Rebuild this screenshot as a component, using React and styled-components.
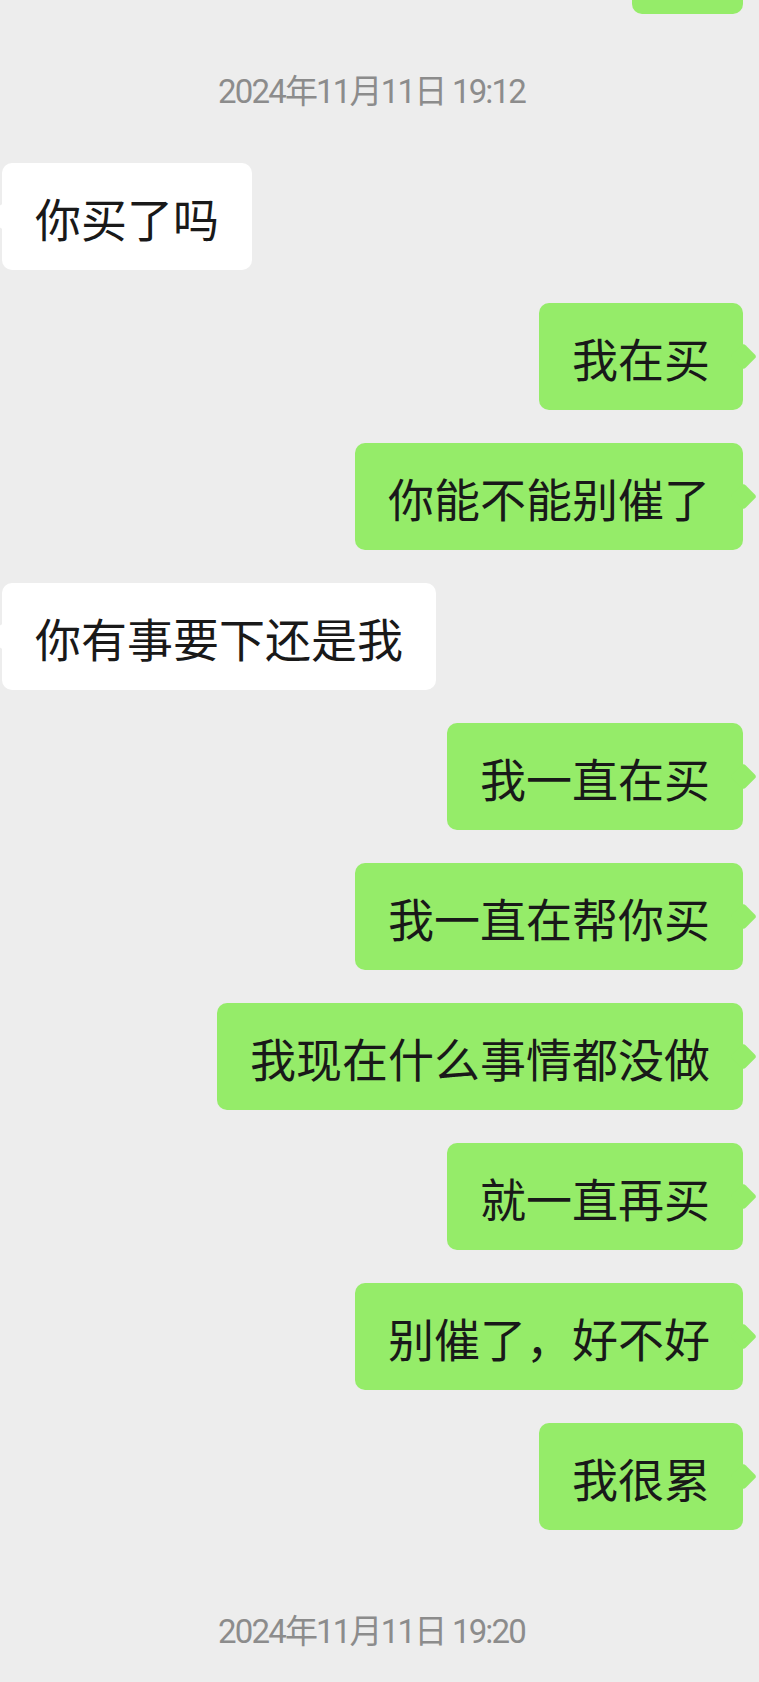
import React from "react";
import styled, { createGlobalStyle } from "styled-components";

const GlobalStyle = createGlobalStyle`
  html, body {
    margin: 0;
    padding: 0;
    background: #ededed;
  }
  * { box-sizing: border-box; }
`;

const Screen = styled.div`
  width: 759px;
  min-height: 1682px;
  background: #ededed;
  overflow: hidden;
  font-family: "Noto Sans CJK SC", "Noto Sans", sans-serif;
`;

const Thread = styled.div`
  display: flex;
  flex-direction: column;
  gap: 33px;
`;

const Stamp = styled.div`
  align-self: center;
  margin: ${(p) => p.$above}px 16px ${(p) => p.$below}px 0;
  height: 40px;
  line-height: 40px;
  font-family: Roboto, "Noto Sans CJK SC", sans-serif;
  font-size: 33px;
  letter-spacing: -1.8px;
  color: #8c8c8c;
  white-space: nowrap;
`;

const Bubble = styled.div`
  position: relative;
  align-self: ${(p) => (p.$mine ? "flex-end" : "flex-start")};
  margin: ${(p) => (p.$mine ? "0 16px 0 0" : "0 0 0 2px")};
  padding: 27px 33px 26px;
  min-height: 107px;
  border-radius: 10px;
  background: ${(p) => (p.$mine ? "#95ec69" : "#ffffff")};
  color: #191919;
  font-size: 46px;
  line-height: 54px;
  white-space: nowrap;

  &::after {
    content: "";
    position: absolute;
    top: 44px;
    ${(p) => (p.$mine ? "right: -9.5px;" : "left: -9.5px;")}
    width: 19px;
    height: 19px;
    border-radius: 3px;
    background: inherit;
    transform: rotate(45deg);
  }
`;

/* the message scrolled mostly out of view at the top */
const ClippedBubble = styled(Bubble)`
  width: 111px;
  margin-top: -93px;
`;

const messages = [
  { mine: false, text: "你买了吗" },
  { mine: true, text: "我在买" },
  { mine: true, text: "你能不能别催了" },
  { mine: false, text: "你有事要下还是我" },
  { mine: true, text: "我一直在买" },
  { mine: true, text: "我一直在帮你买" },
  { mine: true, text: "我现在什么事情都没做" },
  { mine: true, text: "就一直再买" },
  { mine: true, text: "别催了，好不好" },
  { mine: true, text: "我很累" },
];

export default function App() {
  return (
    <>
      <GlobalStyle />
      <Screen>
        <Thread>
          <ClippedBubble $mine />
          <Stamp $above={25} $below={18}>2024年11月11日 19:12</Stamp>
          {messages.map((m, i) => (
            <Bubble key={i} $mine={m.mine}>
              {m.text}
            </Bubble>
          ))}
          <Stamp $above={49} $below={0}>2024年11月11日 19:20</Stamp>
        </Thread>
      </Screen>
    </>
  );
}
